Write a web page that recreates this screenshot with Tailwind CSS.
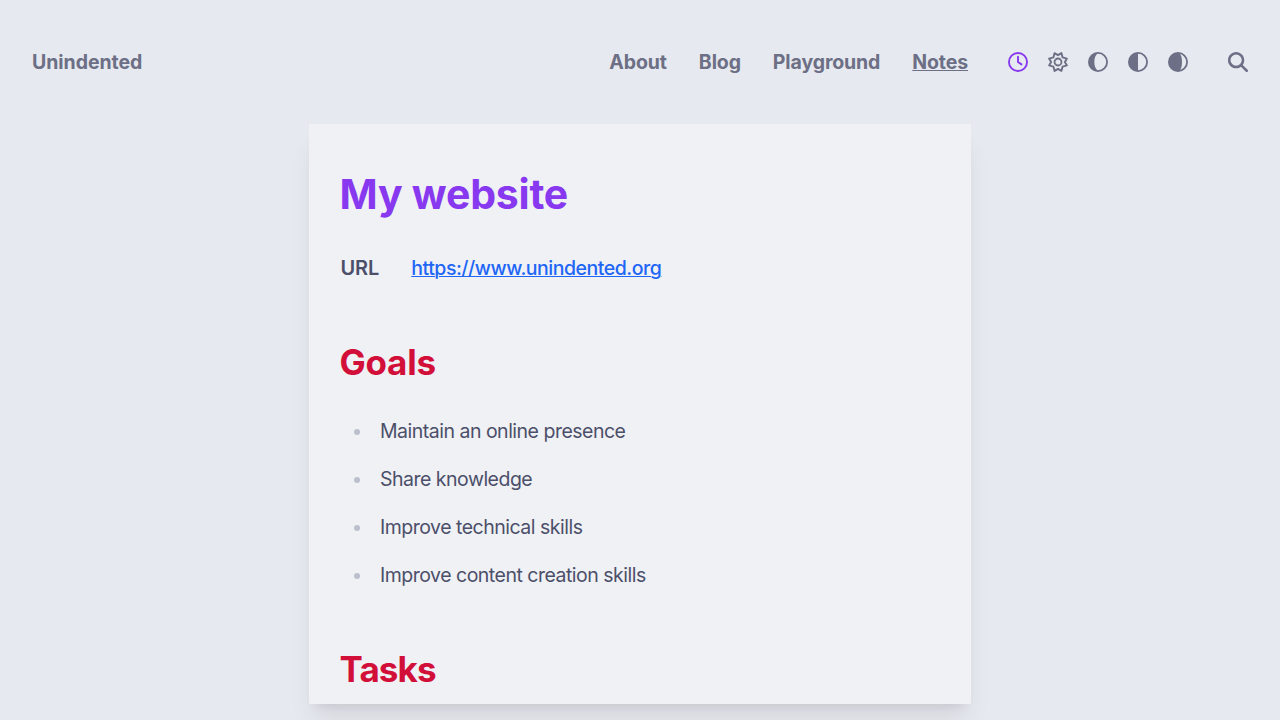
<!DOCTYPE html>
<html lang="en"><head><meta charset="utf-8"><title>My website</title>
<script src="https://cdn.jsdelivr.net/npm/@tailwindcss/browser@4"></script></head>
<body class="bg-[#e6e9ef] font-['Inter',sans-serif] text-[#4c4f69] text-[20px] leading-8 h-screen overflow-hidden">
<header class="h-[124px] px-8 flex items-center justify-between font-bold text-[#6c6f85] text-[19.5px] tracking-[-0.12px]">
<a class="whitespace-nowrap tracking-[-0.04px]">Unindented</a>
<div class="flex items-center">
<nav class="flex gap-8"><a>About</a><a>Blog</a><a>Playground</a><a class="underline decoration-1 underline-offset-1">Notes</a></nav>
<div class="flex gap-5 ml-10">
<svg class="size-5 text-[#8839ef]" viewBox="0 0 20 20" fill="none" stroke="currentColor" stroke-width="1.9"><circle cx="10" cy="10" r="9.05"/><path d="M10 4.7V10l3.5 2.4" stroke-linecap="round"/></svg>
<svg class="size-5 overflow-visible" viewBox="0 0 20 20" fill="none" stroke="currentColor" stroke-width="1.9" stroke-linejoin="round"><path d="M10 3.1 13.4 1.1 14.6 5.4 18.9 6.6 16.9 10 18.9 13.4 14.6 14.6 13.4 18.9 10 16.9 6.6 18.9 5.4 14.6 1.1 13.4 3.1 10 1.1 6.6 5.4 5.4 6.6 1.1Z"/><circle cx="10" cy="10" r="3.5" stroke-width="1.8"/></svg>
<svg class="size-5" viewBox="0 0 20 20" fill="currentColor"><circle cx="10" cy="10" r="9.1" fill="none" stroke="currentColor" stroke-width="1.8"/><path d="M10 1a9 9 0 0 0 0 18Q6.3 16 6.3 10T10 1Z"/></svg>
<svg class="size-5" viewBox="0 0 20 20" fill="currentColor"><circle cx="10" cy="10" r="9.1" fill="none" stroke="currentColor" stroke-width="1.8"/><path d="M10 1a9 9 0 0 0 0 18Z"/></svg>
<svg class="size-5" viewBox="0 0 20 20" fill="currentColor"><circle cx="10" cy="10" r="9.1" fill="none" stroke="currentColor" stroke-width="1.8"/><path d="M10 1a9 9 0 0 0 0 18H11.5Q14 16 14 10T11.5 1Z"/></svg>
</div>
<svg class="size-5 ml-10" viewBox="0 0 512 512" fill="currentColor"><path d="M416 208c0 45.9-14.9 88.3-40 122.7L502.6 457.4c12.5 12.5 12.5 32.8 0 45.3s-32.8 12.5-45.3 0L330.7 376c-34.4 25.2-76.8 40-122.7 40C93.1 416 0 322.9 0 208S93.1 0 208 0S416 93.1 416 208zM208 352a144 144 0 1 0 0-288 144 144 0 1 0 0 288z"/></svg>
</div></header>
<main class="w-[662px] h-[580px] mx-auto pl-[30.5px] overflow-hidden bg-[#eff1f5] shadow-xl shadow-black/8">
<h1 class="pt-[46px] text-[41px] leading-[48px] font-bold text-[#8839ef] tracking-[-0.22px]">My website</h1>
<div class="mt-[34px] pl-px flex gap-8"><span class="font-semibold tracking-[-0.1px]">URL</span><a class="font-medium underline decoration-1 underline-offset-1 text-[19.5px] tracking-[-0.48px] text-[#1e66f5]">https://www.unindented.org</a></div>
<h2 class="mt-[58px] text-[35px] leading-[40px] font-bold text-[#d20f39] tracking-[-0.25px]">Goals</h2>
<ul class="mt-[33px] flex flex-col gap-4 text-[19.5px] tracking-[-0.5px]">
<li class="flex items-center"><i class="size-1.5 rounded-full bg-[#bcc0cc] ml-3.5 mr-[20.5px] mt-0.5"></i>Maintain an online presence</li>
<li class="flex items-center"><i class="size-1.5 rounded-full bg-[#bcc0cc] ml-3.5 mr-[20.5px] mt-0.5"></i>Share knowledge</li>
<li class="flex items-center"><i class="size-1.5 rounded-full bg-[#bcc0cc] ml-3.5 mr-[20.5px] mt-0.5"></i>Improve technical skills</li>
<li class="flex items-center"><i class="size-1.5 rounded-full bg-[#bcc0cc] ml-3.5 mr-[20.5px] mt-0.5"></i>Improve content creation skills</li></ul>
<h2 class="mt-[58px] text-[35px] leading-[40px] font-bold text-[#d20f39] tracking-[-0.9px]">Tasks</h2>
</main></body></html>
